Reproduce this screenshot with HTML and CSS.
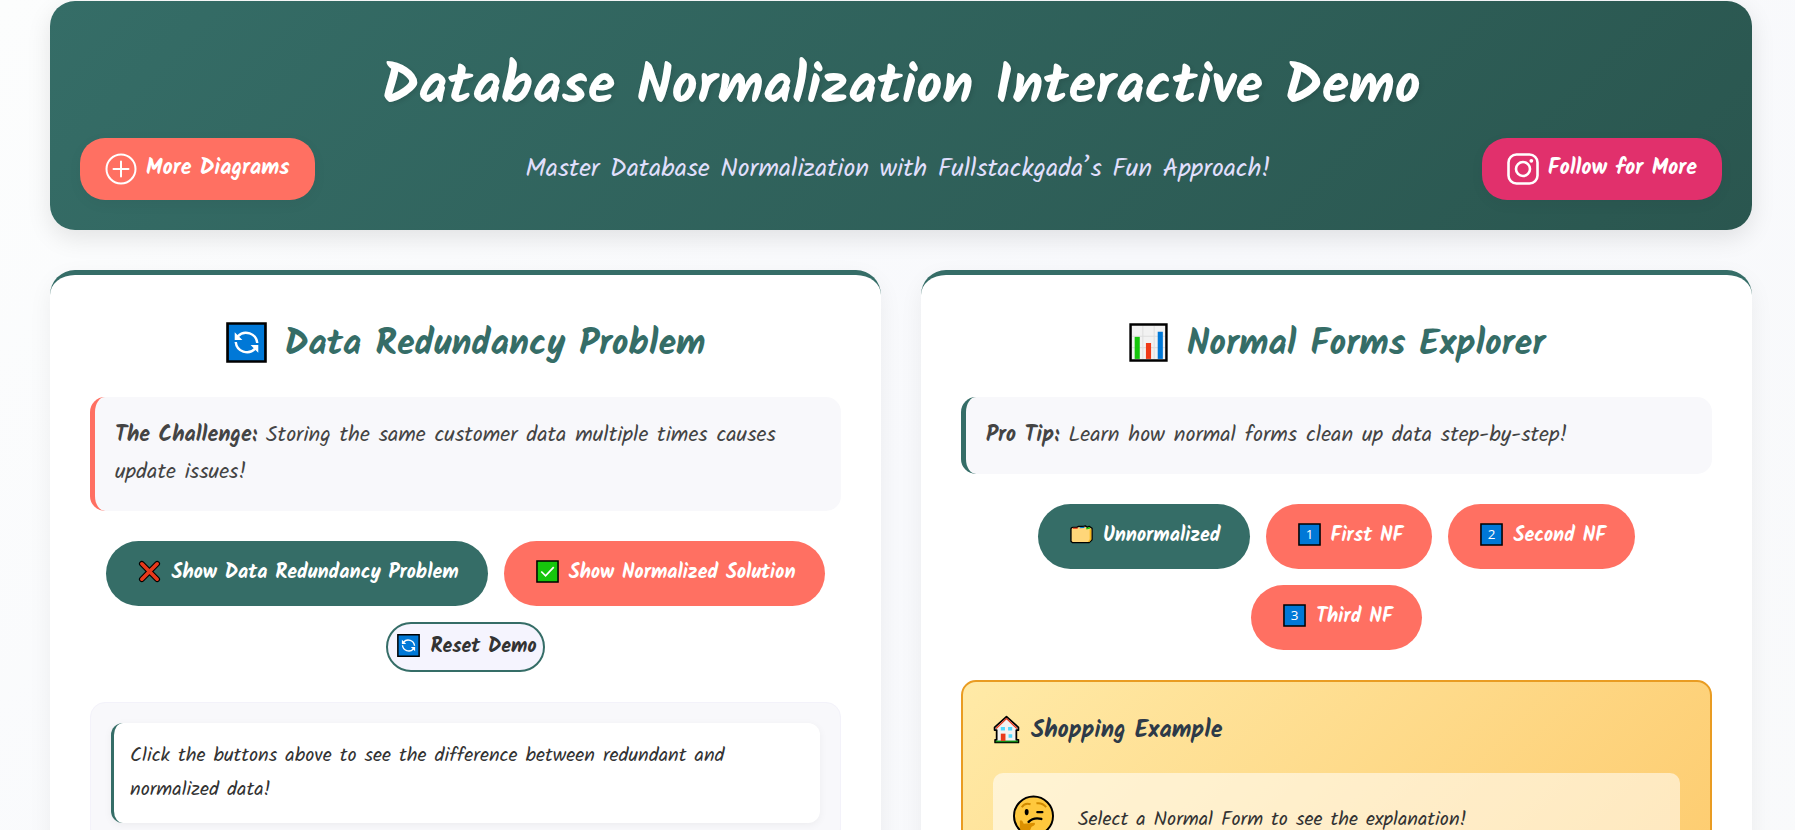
FILE: index.html
```html
<!DOCTYPE html>
<html lang="en">
<head>
<meta charset="utf-8">
<title>Database Normalization Interactive Demo</title>
<link rel="stylesheet" href="styles.css">
</head>
<body>
<svg class="sprite" aria-hidden="true">
  <symbol id="refresh" viewBox="0 0 40 40">
    <path d="M1.500 1.500H38.500V38.500H1.500Z" fill="#0078d7" stroke="#000" stroke-width="2.600"/>
    <path d="M11.500 14A11 11 0 0 1 30.500 20.500M28.500 26A11 11 0 0 1 9.500 19.500" fill="none" stroke="#fff" stroke-width="2.400"/>
    <path d="M8.500 10V17.500H16ZM31.500 30V22.500H24Z" fill="#fff"/>
  </symbol>
</svg>
<div class="page">
  <header class="hero">
    <h1>Database Normalization Interactive Demo</h1>
    <div class="hero-row">
      <a class="pill coral" href="#diagrams">
        <svg class="pill-icon" viewBox="0 0 32 32" fill="none" stroke="#fff" stroke-width="2"><circle cx="16" cy="16" r="14.500"/><path d="M16 8.500V23.500M8.500 16H23.500" stroke-linecap="round"/></svg>
        More Diagrams
      </a>
      <p>Master Database Normalization with Fullstackgada’s Fun Approach!</p>
      <a class="pill pink" href="#follow">
        <svg class="pill-icon" viewBox="0 0 32 32" fill="none" stroke="#fff" stroke-width="2.600"><rect x="1.500" y="1.500" width="29" height="29" rx="8"/><circle cx="16" cy="16" r="7"/><circle cx="24.300" cy="7.800" r="1.900" fill="#fff" stroke="none"/></svg>
        Follow for More
      </a>
    </div>
  </header>

  <main class="columns">
    <section class="card">
      <h2><svg class="title-icon"><use href="#refresh"/></svg>Data Redundancy Problem</h2>
      <p class="note warn"><strong>The Challenge:</strong> Storing the same customer data multiple times causes update issues!</p>
      <div class="actions">
        <button class="btn green" type="button">
          <svg class="emoji" viewBox="0 0 24 24"><path d="M4 4L20 20M20 4L4 20" stroke="#000" stroke-width="6" stroke-linecap="round"/><path d="M4 4L20 20M20 4L4 20" stroke="#e8391b" stroke-width="3.800" stroke-linecap="round"/></svg>
          Show Data Redundancy Problem
        </button>
        <button class="btn coral" type="button">
          <svg class="emoji" viewBox="0 0 24 24"><path d="M1 1H23V23H1Z" fill="#16c60c" stroke="#000" stroke-width="1.600"/><path d="M5.500 12L10 16.500L18.500 7.500" fill="none" stroke="#fff" stroke-width="1.800"/></svg>
          Show Normalized Solution
        </button>
        <button class="btn reset" type="button">
          <svg class="emoji"><use href="#refresh"/></svg>
          Reset Demo
        </button>
      </div>
      <div class="display">
        <p class="message">Click the buttons above to see the difference between redundant and normalized data!</p>
      </div>
    </section>

    <section class="card">
      <h2><svg class="title-icon" viewBox="0 0 40 40"><path d="M2.500 2.500H37.500V37.500H2.500Z" fill="#f2f2f2" stroke="#000" stroke-width="2.400"/><path d="M14.500 4V36M25.500 4V36M4 14H36M4 25H36" stroke="#dedede"/><path d="M6.500 14.500h5V36h-5Z" fill="#16c60c"/><path d="M17.500 20.500h5V36h-5Z" fill="#f03a17"/><path d="M29 9.500h5V36h-5Z" fill="#0078d7"/></svg>Normal Forms Explorer</h2>
      <p class="note tip"><strong>Pro Tip:</strong> Learn how normal forms clean up data step-by-step!</p>
      <div class="actions">
        <button class="btn green" type="button">
          <svg class="emoji" viewBox="0 0 24 24"><path d="M1 6.500Q1 4.500 3 4.500H7L9 3.500H14L16 3L18 4.500L20 3.500L23 5.500V17.500L20 20.500H2.500L1 19Z" fill="#ffd679" stroke="#000" stroke-width="1.400" stroke-linejoin="round"/><path d="M3 5.500H8" stroke="#e8391b" stroke-width="1.200"/><path d="M10 5L15 4.500" stroke="#0078d7" stroke-width="1.200"/><path d="M17 6L21 5" stroke="#16c60c" stroke-width="1.500"/><path d="M20.500 6.500H22.200V17.500L20 19.800H18.500L20.500 17Z" fill="#f5b81c"/></svg>
          Unnormalized
        </button>
        <button class="btn coral" type="button">
          <svg class="emoji" viewBox="0 0 24 24"><path class="keycap" d="M1 1H23V23H1Z"/><text class="digit" x="12" y="17">1</text></svg>
          First NF
        </button>
        <button class="btn coral" type="button">
          <svg class="emoji" viewBox="0 0 24 24"><path class="keycap" d="M1 1H23V23H1Z"/><text class="digit" x="12" y="17">2</text></svg>
          Second NF
        </button>
        <button class="btn coral" type="button">
          <svg class="emoji" viewBox="0 0 24 24"><path class="keycap" d="M1 1H23V23H1Z"/><text class="digit" x="12" y="17">3</text></svg>
          Third NF
        </button>
      </div>
      <div class="example">
        <h3>
          <svg class="house" viewBox="0 0 26 28"><path d="M2 26.500V24H3.500V14.500H1.500V12L13 1.500L24.500 12V14.500H22.500V24H24.500V26.500Z" fill="#f2f2f2" stroke="#000" stroke-width="1.700" stroke-linejoin="round"/><path d="M3 13L13 3.500L23 13" fill="none" stroke="#e8391b" stroke-width="1.200"/><path d="M2.500 25.500H24" stroke="#108a13" stroke-width="1.600"/><path d="M7.500 18H12V25H7.500Z" fill="#e8391b"/><path d="M7.500 11.500H11.500V15H7.500ZM14.500 11.500H18.500V15H14.500ZM15 18.500H18.500V22H15Z" fill="#50d9ff"/></svg>
          Shopping Example
        </h3>
        <div class="explain">
          <svg class="face" viewBox="0 0 42 42"><circle cx="21" cy="21" r="20" fill="#ffc83d" stroke="#000" stroke-width="2"/><path d="M9 12Q12 7 18 9M24 8Q30 7 34 12" fill="none" stroke="#d08a00" stroke-width="2"/><ellipse cx="14" cy="17" rx="2" ry="3.200"/><path d="M25 17H30M16 27Q21 22 29 24" fill="none" stroke="#000" stroke-width="2.500" stroke-linecap="round"/><path d="M7 34V26Q9 24 11 29L22 28Q24 30 19 32L16 39Q10 40 7 34Z" fill="#db9000"/></svg>
          <p>Select a Normal Form to see the explanation!</p>
        </div>
      </div>
    </section>
  </main>
</div>
</body>
</html>
```
FILE: styles.css
```css
* { box-sizing: border-box; }

body {
  margin: 0;
  background: linear-gradient(135deg, #fcfdfd, #f8f9fc 50%, #f9fafb);
  color: #2d3436;
  font: 400 20px/1.85 Kalam, Lato, "Open Sans", sans-serif;
}

h1, h2, h3, p { margin: 0; }

.sprite { position: absolute; width: 0; height: 0; }

.page { padding: 1px 43px 40px 50px; }

.hero {
  padding: 42px 30px 30px;
  border-radius: 25px;
  background: linear-gradient(135deg, #356d67, #2a564f);
  box-shadow: 0 8px 25px rgba(0, 0, 0, 0.1);
  color: #fff;
  text-align: center;
}

.hero h1 {
  margin-bottom: 5px;
  font-size: 56px;
  font-weight: 700;
  line-height: 90px;
  text-shadow: 2px 2px 4px rgba(0, 0, 0, 0.1);
}

.hero-row {
  display: flex;
  align-items: center;
  justify-content: space-between;
}

.hero-row p {
  color: #e0dffc;
  font-size: 26px;
  line-height: 36px;
}

.pill {
  display: flex;
  align-items: center;
  gap: 9px;
  height: 62px;
  padding: 0 25px;
  border-radius: 25px;
  box-shadow: 0 4px 15px rgba(0, 0, 0, 0.04);
  color: #fff;
  font-size: 22px;
  font-weight: 700;
  text-decoration: none;
}

.pill-icon { width: 32px; height: 32px; }

.coral { background: #ff7062; }
.green { background: #356d67; }
.pink { background: #e1306c; }

.columns {
  display: grid;
  grid-template-columns: 1fr 1fr;
  gap: 40px;
  margin-top: 40px;
}

.card {
  padding: 40px;
  border-top: 5px solid #356d67;
  border-radius: 25px;
  background: #fff;
  box-shadow: 0 8px 25px rgba(0, 0, 0, 0.06);
}

.card h2 {
  display: flex;
  align-items: center;
  justify-content: center;
  gap: 18px;
  margin-bottom: 22px;
  color: #356d67;
  font-size: 36px;
  font-weight: 700;
  line-height: 60px;
}

.title-icon { width: 41px; height: 41px; margin-bottom: 5px; }

.note {
  margin-bottom: 30px;
  padding: 20px;
  border-left: 5px solid;
  border-radius: 15px;
  background: #f8f8fb;
  color: #444;
  font-size: 22px;
  line-height: 37px;
}

.note.warn { border-color: #ff7062; }
.note.tip { border-color: #356d67; }

.actions {
  display: flex;
  flex-wrap: wrap;
  justify-content: center;
  gap: 16px;
  margin-bottom: 30px;
}

.btn {
  display: flex;
  align-items: center;
  gap: 10px;
  height: 65px;
  padding: 0 29px 0 32px;
  border: 0;
  border-radius: 33px;
  color: #fff;
  font: inherit;
  font-size: 20px;
  font-weight: 700;
}

.btn.reset {
  height: 50px;
  padding: 0 6px 0 9px;
  border: 2px solid #356d67;
  background: #f5f4fe;
  color: #333;
}

.emoji { width: 23px; height: 23px; margin-bottom: 4px; }

.keycap { fill: #0078d7; stroke: #000; stroke-width: 1.6; }

.digit {
  fill: #fff;
  font: normal 400 14px "Open Sans", sans-serif;
  text-anchor: middle;
}

.display {
  padding: 20px;
  border: 1px solid #f3f2fa;
  border-radius: 15px;
  background: #f8f8fb;
}

.message {
  padding: 16px;
  border-left: 3px solid #356d67;
  border-radius: 12px;
  background: #fff;
  box-shadow: 0 2px 8px rgba(0, 0, 0, 0.05);
  color: #333;
  line-height: 34px;
}

.example {
  padding: 30px;
  border: 2px solid #e99c22;
  border-radius: 15px;
  background: linear-gradient(135deg, #ffeaa7, #fdcb6e);
}

.example h3 {
  display: flex;
  align-items: center;
  gap: 11px;
  margin-bottom: 23px;
  color: #2d3a48;
  font-size: 24px;
  font-weight: 700;
  line-height: 38px;
}

.house { width: 27px; height: 29px; margin-bottom: 3px; }

.explain {
  display: flex;
  align-items: flex-start;
  gap: 24px;
  padding: 20px;
  border-radius: 10px;
  background: rgba(255, 255, 255, 0.55);
  color: #333;
}

.explain p { line-height: 54px; }

.face { width: 41px; height: 46px; }
```
